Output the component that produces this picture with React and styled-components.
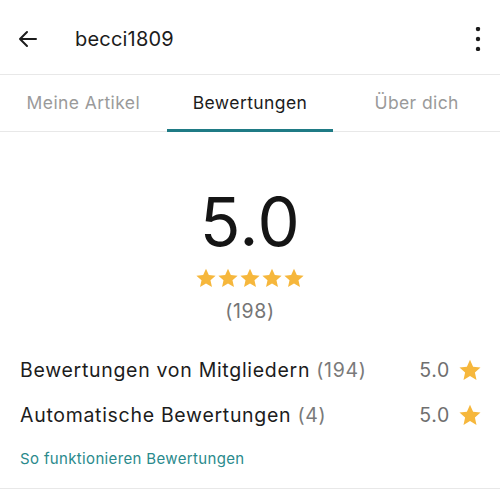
import React from "react";
import styled, { createGlobalStyle } from "styled-components";

const Global = createGlobalStyle`
  html, body { margin: 0; padding: 0; background: #ffffff; }
  body { font-family: Inter, Roboto, "Noto Sans", sans-serif; color: #1c1c1c; }
  * { box-sizing: border-box; }
`;

const Page = styled.div`
  width: 500px;
  height: 500px;
  overflow: hidden;
  background: #fff;
  display: flex;
  flex-direction: column;
`;

const Header = styled.header`
  height: 75px;
  display: flex;
  align-items: center;
  padding: 4px 18px 0 16px;
  border-bottom: 1px solid #e8e8e8;
`;

const IconButton = styled.button`
  border: 0;
  background: none;
  padding: 0;
  display: flex;
  align-items: center;
  justify-content: center;
  color: #1c1c1c;
  width: ${(p) => p.$w || 24}px;
  height: 24px;
`;

const Title = styled.h1`
  margin: 0 0 0 35px;
  flex: 1;
  font-size: 20px;
  font-weight: 400;
  letter-spacing: 0.2px;
  color: #1c1c1c;
`;

const Tabs = styled.nav`
  height: 57px;
  display: grid;
  grid-template-columns: repeat(3, 1fr);
  border-bottom: 1px solid #e8e8e8;
`;

const Tab = styled.div`
  display: flex;
  align-items: center;
  justify-content: center;
  position: relative;
  font-size: 17.5px;
  letter-spacing: 0.4px;
  color: ${(p) => (p.$active ? "#1c1c1c" : "#9a9a9a")};
  padding-bottom: 1px;
  &::after {
    content: "";
    display: ${(p) => (p.$active ? "block" : "none")};
    position: absolute;
    left: 0;
    right: 0;
    bottom: -1px;
    height: 3px;
    background: #1f7b85;
  }
`;

const Summary = styled.section`
  display: flex;
  flex-direction: column;
  align-items: center;
  padding-top: 57px;
`;

const Score = styled.div`
  font-size: 67px;
  line-height: 66px;
  font-weight: 400;
  letter-spacing: 0.5px;
  color: #151515;
`;

const Stars = styled.div`
  display: flex;
  margin-top: 12px;
`;

const Count = styled.div`
  font-size: 19.5px;
  letter-spacing: 0.6px;
  color: #757575;
  margin-top: 10px;
`;

const List = styled.section`
  padding: 24px 18px 0 20px;
  display: flex;
  flex-direction: column;
`;

const Row = styled.div`
  height: 45px;
  display: flex;
  align-items: center;
  justify-content: space-between;
  font-size: 19.5px;
  letter-spacing: 0.7px;
`;

const Label = styled.span`
  color: #1c1c1c;
`;

const Muted = styled.span`
  color: #7a7a7a;
`;

const Value = styled.span`
  display: flex;
  align-items: center;
  gap: 8px;
  color: #6f6f6f;
`;

const Link = styled.a`
  margin-top: 12px;
  font-size: 15px;
  letter-spacing: 0.35px;
  color: #2a8a8c;
  text-decoration: none;
`;

const Divider = styled.div`
  margin-top: 20px;
  height: 1px;
  background: #e8e8e8;
`;

const Star = ({ size = 21 }) => (
  <svg width={size} height={size} viewBox="0 0 24 24">
    <path
      fill="#f6b73c"
      d="M12 1.8l3.1 6.9 7.4.8-5.6 5 1.6 7.4L12 18.1l-6.5 3.8 1.6-7.4-5.6-5 7.4-.8z"
    />
  </svg>
);

export default function App() {
  return (
    <>
      <Global />
      <Page>
        <Header>
          <IconButton aria-label="Zurück">
            <svg width="24" height="24" viewBox="0 0 24 24" fill="none" stroke="#1c1c1c" strokeWidth="2" strokeLinecap="round" strokeLinejoin="round">
              <path d="M20 12H4M11 5l-7 7 7 7" />
            </svg>
          </IconButton>
          <Title>becci1809</Title>
          <IconButton $w={8} aria-label="Mehr">
            <svg width="6" height="24" viewBox="0 0 6 24" fill="#1c1c1c">
              <circle cx="3" cy="2" r="2.2" />
              <circle cx="3" cy="12" r="2.2" />
              <circle cx="3" cy="22" r="2.2" />
            </svg>
          </IconButton>
        </Header>
        <Tabs>
          <Tab>Meine Artikel</Tab>
          <Tab $active>Bewertungen</Tab>
          <Tab>Über dich</Tab>
        </Tabs>
        <Summary>
          <Score>5.0</Score>
          <Stars>
            {[0, 1, 2, 3, 4].map((i) => (
              <Star key={i} size={22} />
            ))}
          </Stars>
          <Count>(198)</Count>
        </Summary>
        <List>
          <Row>
            <Label>
              Bewertungen von Mitgliedern <Muted>(194)</Muted>
            </Label>
            <Value>
              5.0 <Star size={24} />
            </Value>
          </Row>
          <Row>
            <Label>
              Automatische Bewertungen <Muted>(4)</Muted>
            </Label>
            <Value>
              5.0 <Star size={24} />
            </Value>
          </Row>
          <Link href="#">So funktionieren Bewertungen</Link>
        </List>
        <Divider />
      </Page>
    </>
  );
}
